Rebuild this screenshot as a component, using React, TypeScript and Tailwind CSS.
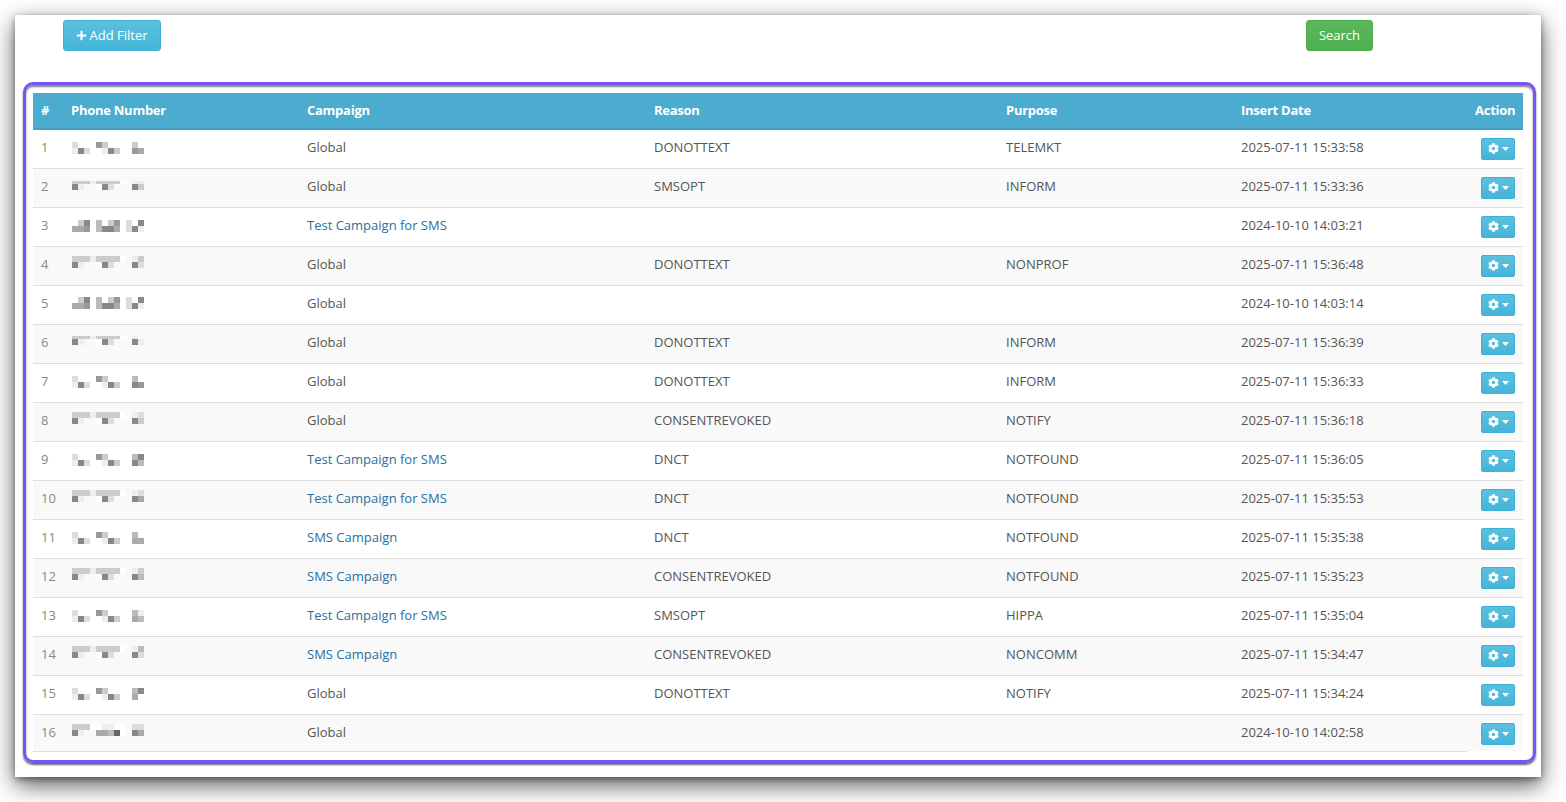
import { FaCog, FaPlus } from "react-icons/fa";

type Row = {
  n: number;
  campaign: string;
  link: boolean;
  reason: string;
  purpose: string;
  date: string;
  top: string;
  bottom: string;
  y: number;
  strip?: boolean;
};

const A = (t: string, b: string) => ({ top: "d...9c..f." + t, bottom: "e8d..e8c.." + b, y: 12 });
const B = (t: string, b: string, y = 9, strip = false) => ({ top: "ccceccccf." + t, bottom: "8e..f8d..." + b, y, strip });
const C = (y: number) => ({ top: "fc8.b.c9.d.8", bottom: "aa9fb88a.d8e", y });

const rows: Row[] = [
  { n: 1, campaign: "Global", link: false, reason: "DONOTTEXT", purpose: "TELEMKT", date: "2025-07-11 15:33:58", ...A("c.", "9a") },
  { n: 2, campaign: "Global", link: false, reason: "SMSOPT", purpose: "INFORM", date: "2025-07-11 15:33:36", ...B("ee", "8c", 12, true) },
  { n: 3, campaign: "Test Campaign for SMS", link: true, reason: "", purpose: "", date: "2024-10-10 14:03:21", ...C(12) },
  { n: 4, campaign: "Global", link: false, reason: "DONOTTEXT", purpose: "NONPROF", date: "2025-07-11 15:36:48", ...B("ec", "8d") },
  { n: 5, campaign: "Global", link: false, reason: "", purpose: "", date: "2024-10-10 14:03:14", ...C(11) },
  { n: 6, campaign: "Global", link: false, reason: "DONOTTEXT", purpose: "INFORM", date: "2025-07-11 15:36:39", ...B("e.", "8e", 11, true) },
  { n: 7, campaign: "Global", link: false, reason: "DONOTTEXT", purpose: "INFORM", date: "2025-07-11 15:36:33", ...A("b.", "89") },
  { n: 8, campaign: "Global", link: false, reason: "CONSENTREVOKED", purpose: "NOTIFY", date: "2025-07-11 15:36:18", ...B("ed", "8c") },
  { n: 9, campaign: "Test Campaign for SMS", link: true, reason: "DNCT", purpose: "NOTFOUND", date: "2025-07-11 15:36:05", ...A("b8", "8b") },
  { n: 10, campaign: "Test Campaign for SMS", link: true, reason: "DNCT", purpose: "NOTFOUND", date: "2025-07-11 15:35:53", ...B("ed", "8a") },
  { n: 11, campaign: "SMS Campaign", link: true, reason: "DNCT", purpose: "NOTFOUND", date: "2025-07-11 15:35:38", ...A("bf", "aa") },
  { n: 12, campaign: "SMS Campaign", link: true, reason: "CONSENTREVOKED", purpose: "NOTFOUND", date: "2025-07-11 15:35:23", ...B("ec", "8b") },
  { n: 13, campaign: "Test Campaign for SMS", link: true, reason: "SMSOPT", purpose: "HIPPA", date: "2025-07-11 15:35:04", ...A("be", "ab") },
  { n: 14, campaign: "SMS Campaign", link: true, reason: "CONSENTREVOKED", purpose: "NONCOMM", date: "2025-07-11 15:34:47", ...B("eb", "8d") },
  { n: 15, campaign: "Global", link: false, reason: "DONOTTEXT", purpose: "NOTIFY", date: "2025-07-11 15:34:24", ...A("b8", "a.") },
  { n: 16, campaign: "Global", link: false, reason: "", purpose: "", date: "2024-10-10 14:02:58", top: "cccffeeff.dd", bottom: "8e..aab6f.8a", y: 9 },
];

function Mosaic({ top, bottom, y, strip }: { top: string; bottom: string; y: number; strip?: boolean }) {
  const cell = (ch: string, i: number, cy: number, h: number) => {
    if (ch === ".") return null;
    const v = parseInt(ch, 16) * 17;
    return <rect key={`${cy}-${i}`} x={i * 6} y={cy} width={6} height={h} fill={`rgb(${v},${v},${v})`} />;
  };
  const topH = strip ? 3 : 6;
  return (
    <svg width={72} height={36} className="ml-px block" shapeRendering="crispEdges">
      {top.split("").map((c, i) => cell(c, i, y, topH))}
      {bottom.split("").map((c, i) => cell(c, i, y + topH, 6))}
    </svg>
  );
}

const columns = ["w-[30px]", "w-[236px]", "w-[347px]", "w-[352px]", "w-[235px]", "w-[234px]", "w-[56px]"];

export default function App() {
  return (
    <div className="h-[802px] w-[1566px] overflow-hidden bg-white pt-[15px] pl-[15px] font-['Open_Sans',sans-serif] text-[13px] text-[#555555]">
      <div className="h-[762px] w-[1526px] bg-white shadow-[0_8px_22px_rgba(0,0,0,0.65),0_2px_6px_rgba(0,0,0,0.35)]">
        <div className="flex h-[67px] items-start justify-between pt-[5px] pr-[168px] pl-[48px]">
          <button className="flex h-[31px] w-[98px] items-center justify-center gap-[2px] rounded-[3px] border border-[#3eb2d6] bg-gradient-to-b from-[#5bc0de] to-[#45b5d8] text-white">
            <FaPlus className="h-[11px] w-[11px]" />
            <span>Add Filter</span>
          </button>
          <button className="flex h-[31px] w-[67px] items-center justify-center rounded-[3px] border border-[#4cae4c] bg-gradient-to-b from-[#5cb85c] to-[#4caf50] text-white">
            Search
          </button>
        </div>
        <div className="ml-[8px] h-[681px] w-[1513px] rounded-[10px] border-[3px] border-[#7654f6] pt-[8px] pl-[7px] shadow-[0_2px_2px_rgba(0,0,0,0.6),inset_0_2px_2px_rgba(0,0,0,0.5)]">
          <table className="w-[1490px] table-fixed border-collapse">
            <colgroup>
              {columns.map((c) => (
                <col key={c} className={c} />
              ))}
            </colgroup>
            <thead>
              <tr className="h-[36px] border-b-2 border-[#419fc2] bg-[#4bacd0] text-left text-white">
                <th className="px-2 pt-px font-bold">#</th>
                <th className="px-2 pt-px font-bold tracking-[-0.02em]">Phone Number</th>
                <th className="px-2 pt-px font-bold tracking-[-0.02em]">Campaign</th>
                <th className="px-2 pt-px font-bold tracking-[-0.02em]">Reason</th>
                <th className="px-2 pt-px font-bold tracking-[-0.02em]">Purpose</th>
                <th className="px-2 pt-px font-bold tracking-[-0.02em]">Insert Date</th>
                <th className="px-2 pt-px text-right font-bold tracking-[-0.02em]">Action</th>
              </tr>
            </thead>
            <tbody>
              {rows.map((r) => {
                const last = r.n === 16;
                const line = last ? "border-b border-[#dddddd] pt-px" : r.n === 1 ? "pb-[3px]" : "pb-px";
                return (
                  <tr
                    key={r.n}
                    className={`${last ? "h-[37px]" : "h-[39px] border-b border-[#dddddd]"} ${r.n % 2 === 0 ? "bg-[#f9f9f9]" : "bg-white"}`}
                  >
                    <td className={`px-2 text-[#888888] ${line}`}>{r.n}</td>
                    <td className={`px-2 py-0 align-top ${last ? "border-b border-[#dddddd]" : ""}`}>
                      <Mosaic top={r.top} bottom={r.bottom} y={r.y} strip={r.strip} />
                    </td>
                    <td className={`px-2 ${line}`}>
                      {r.link ? <a className="text-[#2a6f9e]">{r.campaign}</a> : r.campaign}
                    </td>
                    <td className={`px-2 ${line}`}>{r.reason}</td>
                    <td className={`px-2 ${line}`}>{r.purpose}</td>
                    <td className={`px-2 ${line}`}>{r.date}</td>
                    <td className={`pr-2 ${last ? "pt-[3px]" : ""}`}>
                      <button className="ml-auto flex h-[22px] w-[34px] items-center justify-center gap-[3px] rounded-[2px] border border-[#3eb2d6] bg-gradient-to-b from-[#5bc0de] to-[#45b5d8] text-white">
                        <FaCog className="h-[11px] w-[11px]" />
                        <svg width="7" height="4" viewBox="0 0 7 4" className="block">
                          <polygon points="0,0 7,0 3.5,4" fill="currentColor" />
                        </svg>
                      </button>
                    </td>
                  </tr>
                );
              })}
            </tbody>
          </table>
        </div>
      </div>
    </div>
  );
}
